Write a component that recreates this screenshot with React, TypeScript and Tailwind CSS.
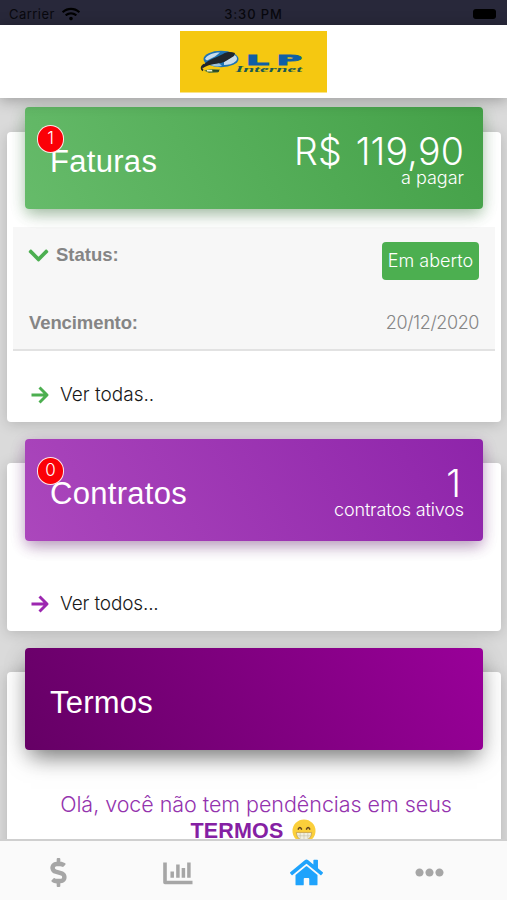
import type { ReactNode } from "react";
import { FaChevronDown, FaDollarSign, FaEllipsisH, FaHome, FaWifi } from "react-icons/fa";

function Logo() {
	return (
		<svg width="147" height="62" viewBox="0 0 147 62">
			<rect width="147" height="61.5" fill="#f5c811" />
			<ellipse cx="41" cy="28" rx="17.500" ry="8.300" fill="#1f74b4" />
			<path d="M25 28c2-4 8-6.500 15-6.500l-5 4-8 4zM44 31l10-7c3 1 4 4 2 6-3 3-8 4-12 4z" fill="#c9dcea" />
			<path d="M29 33l8-3 5 5c-6 1-10 0-13-2z" fill="#9cc2dc" />
			<path d="M22 36c3-6 13-9 21-13 4-2.500 8-2.500 12-1l-1 3c-5 3-9 6-13 7-6 1-12 1-18 5z" fill="#20262c" />
			<path d="M24 33.500c-3 2.500-3 4.500-1 6" fill="none" stroke="#20262c" strokeWidth="1.800" />
			<path d="M24 39.500l7-1.500 9 .5-2 3-9 .5z" fill="#5b7b38" />
			<path d="M27 38.800h5v1.600h-5z" fill="#e5eddc" />
			<path d="M33 39h6v1.800h-6z" fill="#26492c" />
			<g fill="#0e5fa6" stroke="#0e5fa6" strokeWidth=".8" fontFamily="'DejaVu Sans', sans-serif" fontWeight="700" fontSize="14">
				<text x="66" y="33.800" textLength="23" lengthAdjust="spacingAndGlyphs">L</text>
				<text x="96.500" y="33.800" textLength="25.500" lengthAdjust="spacingAndGlyphs">P</text>
			</g>
			<text x="55.500" y="41" fill="#1c5a50" fontFamily="'Liberation Serif', serif" fontStyle="italic" fontWeight="700" fontSize="7.5" textLength="66.500" lengthAdjust="spacingAndGlyphs">
				Internet
			</text>
		</svg>
	);
}

function Arrow({ className }: { className: string }) {
	return (
		<svg className={className} width="18" height="18" viewBox="0 0 18 18" fill="none" stroke="currentColor" strokeWidth="2.9" strokeLinejoin="round">
			<path d="M.5 9h15M8.500 1.500 16 9l-7.500 7.500" />
		</svg>
	);
}

function ChartIcon() {
	return (
		<svg width="30" height="24" viewBox="0 0 30 24" fill="none" stroke="currentColor">
			<path d="M2 1.500v20h27.500" strokeWidth="3.6" strokeLinejoin="round" />
			<path d="M9.200 10.500v6.300M14.900 3.500v13.300M20.400 7v9.800M25.900 1.500v15.300" strokeWidth="3.5" />
		</svg>
	);
}

function Badge({ children }: { children: ReactNode }) {
	return (
		<span className="absolute left-3 top-[18px] flex h-7 w-[27px] items-center justify-center rounded-full border-[1.5px] border-white/90 bg-[#fb0007] text-[17px] font-light text-white">
			{children}
		</span>
	);
}

function Card({ className, header, children }: { className: string; header: ReactNode; children?: ReactNode }) {
	return (
		<section className={"mb-[41px] ml-[7px] mr-1.5 shrink-0 rounded bg-white shadow-[0_2px_14px_rgba(0,0,0,0.17)] " + className}>
			{header}
			{children}
		</section>
	);
}

export default function App() {
	return (
		<div className="flex h-[900px] w-full flex-col overflow-hidden bg-[#dadada] font-['Inter','Liberation_Sans',sans-serif] text-black">
			<div className="grid h-[25px] shrink-0 grid-cols-3 items-center bg-[#28283a] px-[9px] pt-[3px] text-[13px] leading-none text-[#08080e]">
				<div className="flex items-center gap-[7px] tracking-[0.45px]">
					Carrier <FaWifi size={18} className="text-black" />
				</div>
				<div className="text-center font-medium tracking-[0.9px]">3:30 PM</div>
				<div className="flex justify-end pr-0.5">
					<div className="h-2.5 w-[23px] rounded-[3px] bg-black" />
				</div>
			</div>
			<header className="relative z-10 flex h-[73px] shrink-0 justify-center bg-white pt-1.5 shadow-[0_2px_14px_rgba(0,0,0,0.3)]">
				<Logo />
			</header>

			<main className="flex h-[741px] shrink-0 flex-col overflow-hidden pt-[34px]">
				<Card
					className="h-[290px]"
					header={
						<div className="relative -mt-[25px] ml-[18px] mr-[18px] flex h-[102px] justify-between rounded bg-linear-[60deg] from-[#66bb6a] to-[#43a047] pl-[18px] pr-[19px] text-white shadow-[0_8px_16px_-4px_rgba(0,0,0,0.15),0_4px_20px_rgba(0,0,0,0.08),0_5px_14px_rgba(76,175,80,0.3)]">
							<h2 className="ml-[7px] mt-[36px] font-['Liberation_Sans'] text-[31px] leading-[38px] tracking-[0.3px]">Faturas</h2>
							<Badge>1</Badge>
							<div className="mt-[29px] text-right font-light">
								<div className="text-[37.5px] leading-8 tracking-[0.2px] [word-spacing:3px]">R$ 119,90</div>
								<div className="text-[18px] leading-5">a pagar</div>
							</div>
						</div>
					}
				>
					<div className="mx-1.5 mt-[18px] h-[124px] border-b-2 border-[#e2e2e2] bg-[#f7f7f7] px-4 text-[#858585]">
						<div className="flex h-[72px] justify-between pt-[14.5px]">
							<div className="flex h-[27px] items-center gap-1.5 font-['Liberation_Sans'] text-[18.5px] font-bold">
								<FaChevronDown size={23} className="-ml-0.5 text-[#4caf50]" /> Status:
							</div>
							<div className="flex h-[38px] w-[97px] items-center justify-center rounded bg-[#4caf50] text-[18px] font-light text-white">Em aberto</div>
						</div>
						<div className="flex items-center justify-between pt-2.5 leading-7">
							<span className="font-['Liberation_Sans'] text-[18.5px] font-bold tracking-[-0.1px]">Vencimento:</span>
							<span className="text-[18px] font-light tracking-[-0.4px]">20/12/2020</span>
						</div>
					</div>
					<div className="mt-[30px] flex items-center gap-[11px] pl-6 text-[19px] font-light leading-7 text-[#181818]">
						<Arrow className="text-[#4caf50]" /> Ver todas..
					</div>
				</Card>

				<Card
					className="h-[168px]"
					header={
						<div className="relative -mt-6 ml-[18px] mr-[18px] flex h-[102px] justify-between rounded bg-linear-[60deg] from-[#ab47bc] to-[#8e24aa] pl-[18px] pr-[19px] text-white shadow-[0_8px_16px_-4px_rgba(0,0,0,0.15),0_4px_20px_rgba(0,0,0,0.08),0_5px_14px_rgba(156,39,176,0.3)]">
							<h2 className="ml-[7px] mt-[36px] font-['Liberation_Sans'] text-[31px] leading-[38px] tracking-[0.3px]">Contratos</h2>
							<Badge>0</Badge>
							<div className="mt-[29px] text-right font-light">
								<div className="pr-[3px] text-[37.5px] leading-8">1</div>
								<div className="text-[18px] leading-5 tracking-[-0.15px]">contratos ativos</div>
							</div>
						</div>
					}
				>
					<div className="mt-[49px] flex items-center gap-[11px] pl-6 text-[19px] font-light leading-7 tracking-[-0.15px] text-[#181818]">
						<Arrow className="text-[#9c27b0]" /> Ver todos...
					</div>
				</Card>

				<Card
					className="h-[220px]"
					header={
						<div className="-mt-6 ml-[18px] mr-[18px] h-[102px] rounded bg-linear-[60deg] from-[#650065] to-[#990099] px-[25px] pt-[36px] text-white shadow-[0_12px_22px_-6px_rgba(0,0,0,0.5),0_4px_24px_rgba(0,0,0,0.12)]">
							<h2 className="font-['Liberation_Sans'] text-[31px] leading-[38px] tracking-[0.2px]">Termos</h2>
						</div>
					}
				>
					<div className="mt-[41px] pl-1 text-center text-[21.5px] font-light leading-[26px] text-[#9433ae]">
						<p className="tracking-[-0.05px]">Olá, você não tem pendências em seus</p>
						<p className="-ml-1.5">
							<b className="font-['Liberation_Sans'] font-bold tracking-[0.2px] text-[#8520a3]">TERMOS</b>
							<svg className="ml-2 inline-block align-[-5px]" width="24" height="24" viewBox="0 0 25 25">
								<circle cx="12.500" cy="12.500" r="12" fill="#fbcf3b" />
								<path d="M6.500 10.500q1.700-3.500 3.400 0M15.100 10.500q1.700-3.500 3.400 0" fill="none" stroke="#65451d" strokeWidth="1.600" strokeLinecap="round" />
								<path d="M4.500 14h16q-.5 8-8 8t-8-8Z" fill="#f1efdf" stroke="#c19a45" strokeWidth=".8" />
								<path d="M5 17.500h15M8.500 14.500v6M12.500 14.500v7M16.500 14.500v6" stroke="#c4bfa6" strokeWidth=".6" />
							</svg>
						</p>
					</div>
				</Card>
			</main>

			<nav className="grid h-[61px] shrink-0 grid-cols-[116px_124px_132px_115px] items-center border-t-2 border-[#cfcfcf] bg-[#fafafa] pt-1 text-[#a6a6a6]">
				<div className="flex justify-center"><FaDollarSign size={29} /></div>
				<div className="flex justify-center"><ChartIcon /></div>
				<div className="flex justify-center"><FaHome size={33} className="text-[#1fa3fc]" /></div>
				<div className="flex justify-center"><FaEllipsisH size={29} /></div>
			</nav>
		</div>
	);
}
